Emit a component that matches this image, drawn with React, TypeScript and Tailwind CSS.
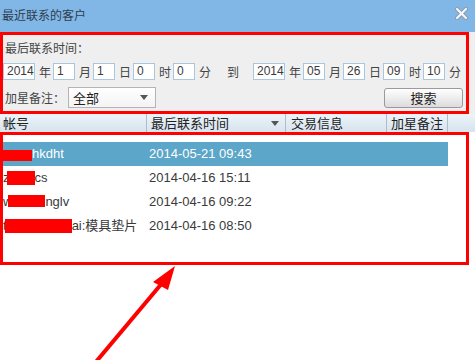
import React from "react";

const cn = "font-['Noto_Sans_CJK_SC',sans-serif]";

function Box({ v, w }: { v: string; w: string }) {
  return (
    <div
      className={`${w} h-[17px] border border-[#a9c7e1] bg-white pl-[3px] text-[12px] leading-[15px] text-[#3a3a3a] font-['Liberation_Sans',sans-serif]`}
    >
      {v}
    </div>
  );
}

function Unit({ v, label, first }: { v: string; label: string; first?: boolean }) {
  return (
    <div className={`flex items-center ${first ? "w-[50px]" : "w-[40px]"}`}>
      <Box v={v} w={first ? "w-[32px]" : "w-[22px]"} />
      <span className={`ml-[4px] text-[12px] leading-[14px] text-[#444] ${cn}`}>{label}</span>
    </div>
  );
}

function Caret() {
  return (
    <svg width="8" height="5" viewBox="0 0 8 5">
      <path d="M0 0h8L4 5z" fill="#555" />
    </svg>
  );
}

type Row = { pre: string; bar: string; post: string; date: string; selected?: boolean };

const rows: Row[] = [
  { pre: "", bar: "w-[29px] h-[11px] mt-[2px]", post: "hkdht", date: "2014-05-21 09:43", selected: true },
  { pre: "z", bar: "w-[28px] h-[14px] ml-[-3px]", post: "cs", date: "2014-04-16 15:11" },
  { pre: "w", bar: "w-[37px] h-[12px] ml-[-4px] mt-[-2px]", post: "nglv", date: "2014-04-16 09:22" },
  { pre: "t", bar: "w-[67px] h-[14px] ml-[-2px]", post: "ai:模具垫片", date: "2014-04-16 08:50" },
];

export default function App() {
  return (
    <div className="relative w-[475px] h-[360px] overflow-hidden bg-white font-['Liberation_Sans','Noto_Sans_CJK_SC',sans-serif]">
      {/* 标题栏 */}
      <div className="flex justify-between h-[32px] bg-[#80b7e7]">
        <span className={`pl-[2px] pt-[8px] text-[12px] leading-[14px] text-[#2f3d4c] ${cn}`}>
          最近联系的客户
        </span>
        <svg className="mt-[7px] mr-[7px]" width="13" height="13" viewBox="0 0 13 13">
          <path d="M2 2l9 9M11 2l-9 9" stroke="#8a9aab" strokeWidth="4" strokeLinecap="round" />
          <path d="M2 2l9 9M11 2l-9 9" stroke="#f4f8fc" strokeWidth="2.2" strokeLinecap="round" />
        </svg>
      </div>

      {/* 搜索条件 */}
      <div className="bg-[#efefef]">
        <div className="w-[469px] border-[3px] border-[#ff0000] pt-[6px] pb-[3px] flex flex-col">
          <div className={`pl-[2px] h-[14px] text-[12px] leading-[14px] text-[#444] ${cn}`}>最后联系时间：</div>
          <div className="flex items-center mt-[8px] h-[17px]">
            <Unit first v="2014" label="年" />
            <Unit v="1" label="月" />
            <Unit v="1" label="日" />
            <Unit v="0" label="时" />
            <Unit v="0" label="分" />
            <div className={`w-[40px] pl-[14px] text-[12px] leading-[14px] text-[#444] ${cn}`}>到</div>
            <Unit first v="2014" label="年" />
            <Unit v="05" label="月" />
            <Unit v="26" label="日" />
            <Unit v="09" label="时" />
            <Unit v="10" label="分" />
          </div>
          <div className="flex items-center mt-[7px] h-[21px]">
            <span className={`w-[65px] pl-[2px] text-[12px] leading-[14px] text-[#444] ${cn}`}>加星备注：</span>
            <div className="flex items-center justify-between w-[88px] h-[21px] border border-[#b4b4b4] bg-gradient-to-b from-white to-[#f3f3f3] pl-[4px] pr-[7px]">
              <span className={`text-[13px] leading-[15px] text-[#222] ${cn}`}>全部</span>
              <Caret />
            </div>
            <button className="ml-auto mr-[3px] w-[79px] h-[20px] rounded-[3px] border border-[#9a9a9a] bg-gradient-to-b from-white to-[#dcdcdc] text-[13px] leading-[15px] text-[#222] font-['Noto_Sans_CJK_SC',sans-serif]">
              搜索
            </button>
          </div>
        </div>
      </div>

      {/* 表头 */}
      <div className={`flex h-[18px] bg-gradient-to-b from-[#eef4f9] to-[#d6e3ee] text-[13px] leading-[18px] text-[#222] ${cn}`}>
        <div className="w-[147px] pl-[3px] border-r border-[#aebdca]">帐号</div>
        <div className="w-[139px] pl-[4px] pr-[6px] flex items-center justify-between border-r border-[#aebdca]">
          <span>最后联系时间</span>
          <Caret />
        </div>
        <div className="w-[101px] pl-[5px] border-r border-[#aebdca]">交易信息</div>
        <div className="w-[61px] pl-[4px] border-r border-[#aebdca]">加星备注</div>
        <div className="flex-1" />
      </div>

      {/* 列表 */}
      <div className="w-[469px] h-[133px] border-[3px] border-[#ff0000] pt-[7px]">
        {rows.map((r) => (
          <div
            key={r.date}
            className={`flex items-center w-[445px] h-[24px] text-[13px] ${
              r.selected ? "bg-[#5ba6c9] text-white" : "text-[#3a3a3a]"
            }`}
          >
            <div className="w-[144px] flex items-center">
              {r.pre && <span>{r.pre}</span>}
              <span className={`inline-block bg-[#ff0000] ${r.bar}`} />
              <span>{r.post}</span>
            </div>
            <div className="pl-[2px]">{r.date}</div>
          </div>
        ))}
      </div>

      {/* 箭头 */}
      <svg className="absolute left-0 top-0 pointer-events-none" width="475" height="360" viewBox="0 0 475 360">
        <path d="M95 363L163 282" stroke="#ff0000" strokeWidth="4" />
        <path d="M175 266L153 282L168 290z" fill="#ff0000" />
      </svg>
    </div>
  );
}
